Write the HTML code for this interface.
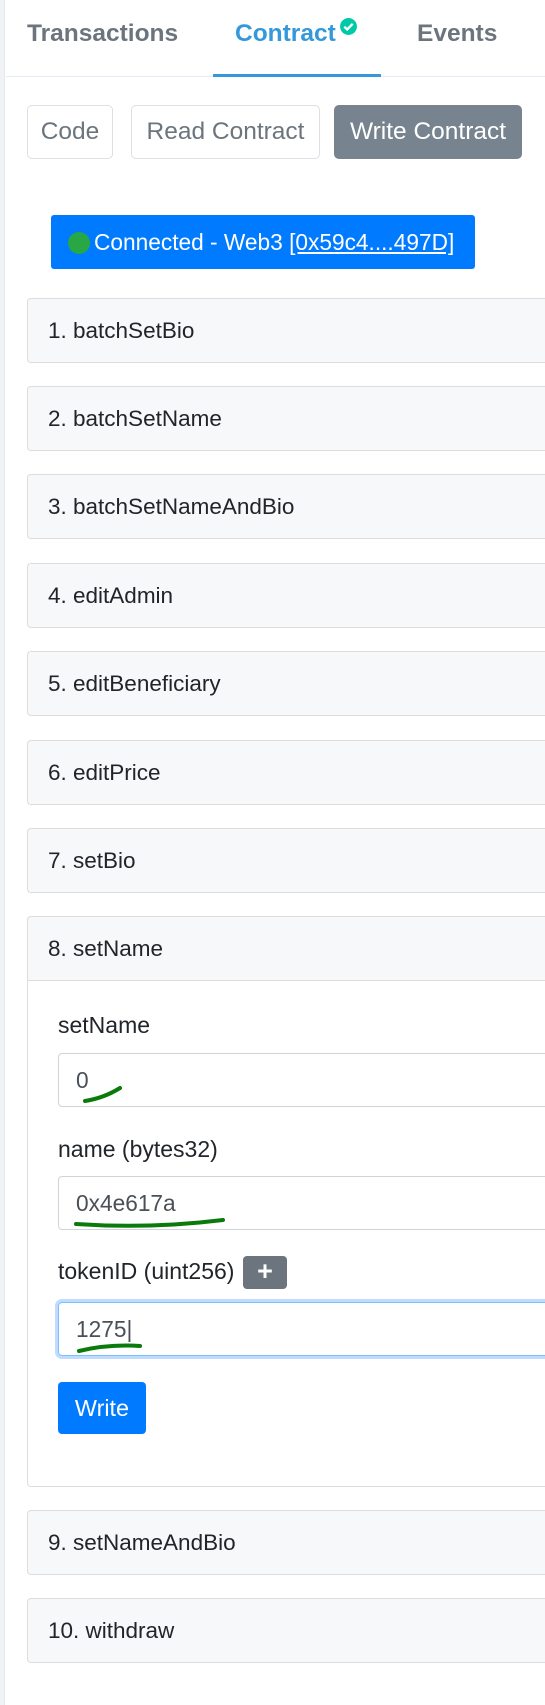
<!DOCTYPE html>
<html><head><meta charset="utf-8"><style>
*{box-sizing:border-box;margin:0;padding:0}
body{width:545px;height:1705px;background:#fff;font-family:"Liberation Sans",sans-serif;position:relative;overflow:hidden;color:#212529}
.strip{position:absolute;left:0;top:0;width:5px;height:1705px;background:#f1f2f5;border-right:1px solid #e8e9ee}
.a{position:absolute}
.tab{font-size:24.5px;font-weight:bold;color:#6c757d;top:20px}
.btn{position:absolute;top:105px;height:54px;border:1px solid #dcdfe4;border-radius:5px;font-size:24.5px;color:#6c757d;line-height:52px;text-align:center}
.item{position:absolute;left:27px;width:540px;height:65px;background:#f7f8fa;border:1px solid #ddd;border-radius:4px;font-size:22.5px;line-height:63px;padding-left:20px;color:#212529}
.lbl{position:absolute;left:58px;font-size:23px;color:#212529}
.inp{position:absolute;left:58px;width:500px;height:54px;border:1px solid #ced4da;border-radius:4px;font-size:22.7px;line-height:52px;padding-left:17px;color:#495057}
.sq{fill:none;stroke:#0a7a0a;stroke-width:4;stroke-linecap:round}
</style></head><body>
<div class="strip"></div>
<div class="a tab" style="left:27px">Transactions</div>
<div class="a tab" style="left:235px;color:#3498db">Contract</div>
<svg class="a" style="left:339px;top:17px" width="19" height="19" viewBox="0 0 18 18"><circle cx="9" cy="9" r="8" fill="#00c9a7"/><path d="M5 9.2l2.7 2.6L13 6.5" stroke="#fff" stroke-width="2.2" fill="none"/></svg>
<div class="a tab" style="left:417px">Events</div>
<div class="a" style="left:6px;top:76px;width:539px;height:1px;background:#e7eaf3"></div>
<div class="a" style="left:213px;top:74px;width:168px;height:3px;background:#3498db"></div>
<div class="btn" style="left:27px;width:86px">Code</div>
<div class="btn" style="left:131px;width:189px">Read Contract</div>
<div class="btn" style="left:334px;width:188px;background:#77838f;border-color:#77838f;color:#fff">Write Contract</div>
<div class="a" style="left:51px;top:215px;width:424px;height:54px;background:#007bff;border-radius:3px;color:#fff;font-size:22.7px;line-height:54px;padding-left:17px;white-space:nowrap"><span style="display:inline-block;width:22px;height:22px;border-radius:50%;background:#28a745;vertical-align:-4px;margin-right:4px"></span>Connected - Web3 <u>[0x59c4....497D]</u></div>
<div class="item" style="top:298px">1. batchSetBio</div>
<div class="item" style="top:386px">2. batchSetName</div>
<div class="item" style="top:474px">3. batchSetNameAndBio</div>
<div class="item" style="top:563px">4. editAdmin</div>
<div class="item" style="top:651px">5. editBeneficiary</div>
<div class="item" style="top:740px">6. editPrice</div>
<div class="item" style="top:828px">7. setBio</div>
<div class="a" style="left:27px;top:916px;width:540px;height:571px;border:1px solid #ddd;border-radius:4px;background:#fff"></div>
<div class="item" style="top:916px;border-radius:4px 4px 0 0">8. setName</div>
<div class="lbl" style="top:1012px">setName</div>
<div class="inp" style="top:1053px">0</div>
<div class="lbl" style="top:1136px">name (bytes32)</div>
<div class="inp" style="top:1176px">0x4e617a</div>
<div class="lbl" style="top:1258px">tokenID (uint256)</div>
<div class="a" style="left:243px;top:1256px;width:44px;height:33px;background:#6c757d;border-radius:4px;color:#fff;font-size:27px;font-weight:bold;line-height:31px;text-align:center">+</div>
<div class="inp" style="top:1302px;border-color:#80bdff;box-shadow:0 0 0 3px #bfdcff">1275|</div>
<svg class="a" style="left:0;top:0" width="545" height="1705"><path class="sq" d="M85 1101 Q104 1098 120 1088"/><path class="sq" d="M76 1224 Q150 1229 223 1220"/><path class="sq" d="M79 1351 Q108 1344 140 1346"/></svg>
<div class="a" style="left:58px;top:1382px;width:88px;height:52px;background:#007bff;border-radius:4px;color:#fff;font-size:23.4px;line-height:52px;text-align:center">Write</div>
<div class="item" style="top:1510px">9. setNameAndBio</div>
<div class="item" style="top:1598px">10. withdraw</div>
</body></html>
